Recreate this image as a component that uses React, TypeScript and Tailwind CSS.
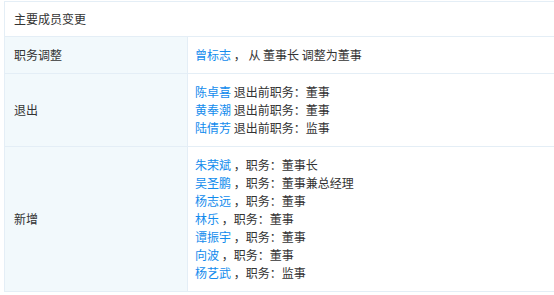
const link = "text-[#128bed]";

const quits = [
  { name: "陈卓喜", role: "董事" },
  { name: "黄奉潮", role: "董事" },
  { name: "陆倩芳", role: "监事" },
];

const adds = [
  { name: "朱荣斌", role: "董事长" },
  { name: "吴圣鹏", role: "董事兼总经理" },
  { name: "杨志远", role: "董事" },
  { name: "林乐", role: "董事" },
  { name: "谭振宇", role: "董事" },
  { name: "向波", role: "董事" },
  { name: "杨艺武", role: "监事" },
];

const labelCell =
  "w-[183px] shrink-0 border-r border-[#e4eef6] bg-[#f2f9fc] pl-[9px] flex items-center";
const valueCell = "flex-1 pl-[7px] py-[9px]";

export default function App() {
  return (
    <div
      className="h-[295px] w-[554px] overflow-hidden bg-white pl-[4px] pt-px text-[12px] leading-[18px] text-[#333]"
      style={{ fontFamily: '"Noto Sans CJK SC", "Noto Sans", sans-serif' }}
    >
      <div className="w-[700px] border border-[#e4eef6]">
        <div className="flex h-[35px] items-center border-b border-[#e4eef6] pl-[9px]">主要成员变更</div>

        <div className="flex border-b border-[#e4eef6]">
          <div className={labelCell}>职务调整</div>
          <div className={valueCell}>
            <span className={link}>曾标志</span> ， 从 董事长 调整为董事
          </div>
        </div>

        <div className="flex border-b border-[#e4eef6]">
          <div className={labelCell}>退出</div>
          <div className={valueCell}>
            {quits.map((q) => (
              <div key={q.name}>
                <span className={link}>{q.name}</span> 退出前职务：{q.role}
              </div>
            ))}
          </div>
        </div>

        <div className="flex">
          <div className={labelCell}>新增</div>
          <div className={valueCell}>
            {adds.map((a) => (
              <div key={a.name}>
                <span className={link}>{a.name}</span> ，职务：{a.role}
              </div>
            ))}
          </div>
        </div>
      </div>
    </div>
  );
}
